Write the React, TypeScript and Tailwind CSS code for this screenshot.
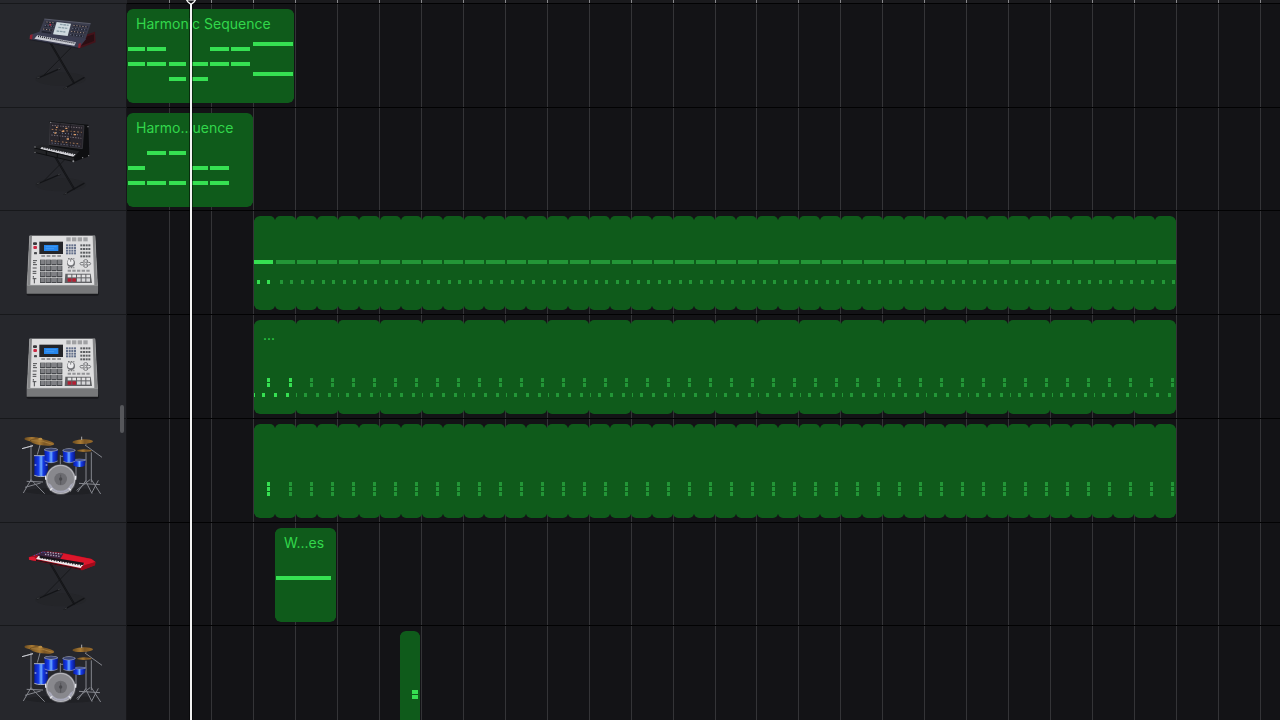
import React from "react";

type Note = { x: number; y: number; w: number; dim?: boolean };

const STEP = 21;

const range = (n: number) => Array.from({ length: n }, (_, i) => i);

const SLOTS = [
  { x: 1, w: 17 },
  { x: 20, w: 19 },
  { x: 42, w: 17 },
  { x: 64, w: 17 },
  { x: 83, w: 19 },
  { x: 104, w: 19 },
];

const phrase = (slots: number[], y: number): Note[] => slots.map((s) => ({ ...SLOTS[s], y }));

const harmonicLong: Note[] = [
  ...phrase([0, 1, 4, 5], 38),
  ...phrase([0, 1, 2, 3, 4, 5], 53),
  ...phrase([2, 3], 68),
  { x: 126, y: 33, w: 40 },
  { x: 126, y: 63, w: 40 },
];

const harmonicShort: Note[] = [
  ...phrase([1, 2], 38),
  ...phrase([0, 3, 4], 53),
  ...phrase([0, 1, 2, 3, 4], 68),
];

const kickLoop: Note[] = range(44).flatMap((k) => [
  { x: k ? k * STEP + 1 : 0, y: 44, w: 19, dim: k > 0 },
  { x: k * STEP + (k ? 5 : 3), y: 64, w: 3, dim: k > 0 },
  { x: k * STEP + (k ? 15 : 13), y: 64, w: 3, dim: k > 0 },
]);

const hatLoop: Note[] = [
  ...range(44).flatMap((k) =>
    [58, 63].map((y) => ({ x: k * STEP + (k ? 14 : 13), y, w: 3, dim: k > 1 })),
  ),
  ...range(22).flatMap((k) =>
    [0, 8, 20, 32].map((x, i) => ({ x: k * STEP * 2 + x, y: 73, w: i ? 3 : 1, dim: k > 0 })),
  ),
];

const snareLoop: Note[] = range(44).flatMap((k) =>
  [58, 63, 68].map((y) => ({ x: k * STEP + (k ? 14 : 13), y, w: 3, dim: k > 0 })),
);

function Notes({ notes }: { notes: Note[] }) {
  return (
    <svg className="absolute inset-0 h-full w-full" shapeRendering="crispEdges" aria-hidden="true">
      {notes.map((n, i) => (
        <rect key={i} x={n.x} y={n.y} width={n.w} height="4" fill={n.dim ? "#239637" : "#36e052"} />
      ))}
    </svg>
  );
}

type RegionProps = { className: string; title?: string; loops?: number; notes: Note[] };

function Region({ className, title, loops = 1, notes }: RegionProps) {
  return (
    <div className={"relative flex h-[94px] flex-none overflow-hidden rounded-md " + className}>
      {range(loops).map((i) => (
        <div key={i} className="h-full flex-1 rounded-[5px] bg-[#0f5b1b]" />
      ))}
      <div className="absolute inset-x-0 inset-y-[4px] bg-[#0f5b1b]" />
      <Notes notes={notes} />
      {title && (
        <p className="absolute top-[5px] left-[9px] text-sm leading-5 whitespace-nowrap text-[#32d74b]">{title}</p>
      )}
    </div>
  );
}

function Stand() {
  return (
    <g fill="none" strokeLinecap="round">
      <ellipse cx="182" cy="240" rx="76" ry="20" fill="#242529" />
      <path d="M213 146 L132 228" stroke="#17181b" strokeWidth="3" />
      <path d="M150 130 L222 252" stroke="#121316" strokeWidth="6" />
      <path d="M151 132 L220 249" stroke="#26272b" strokeWidth="1" />
      <path d="M112 238 L180 209 M193 269 L252 236" stroke="#131417" strokeWidth="4" />
      <path d="M112 237 L118 235 M175 210 L180 208 M194 268 L200 265" stroke="#4a4b4f" strokeWidth="2" />
    </g>
  );
}

const shell = "h-[90px] w-[90px] flex-none";

function PolySynth() {
  return (
    <svg className={shell} viewBox="54 33 270 270" role="img" aria-label="Poly synth">
      <Stand />
      <path d="M262 106 L285 98 L287 130 L240 148 L236 132Z" fill="#43131a" />
      <path d="M262 112 L282 106 L282 126 L244 140Z" fill="#2b0e13" />
      <path d="M133 60 L272 74 L256 122 L117 101Z" fill="#3a3c4c" />
      <path d="M133 60 L272 74" stroke="#6c6f80" strokeWidth="2" />
      <path d="M90 108 L116 99 L258 120 L236 148 L89 121Z" fill="#3a3c50" />
      <path d="M90 108 L98 106 L96 123 L89 121Z M236 134 L243 132 L241 146 L234 148Z" fill="#8f2230" />
      <path d="M112 109 L228 130 L223 140 L103 119Z" fill="#c9cbd3" />
      <path d="M114 112 L226 133" stroke="#1c1d26" strokeWidth="4" strokeDasharray="3 3" />
      <path d="M89 122 L236 148" stroke="#1c1d26" strokeWidth="3" />
      <path d="M170 69 L213 74 L203 111 L159 106Z" fill="#cfd9de" />
      <path d="M180 76 L206 79 M175 85 L202 88 M170 96 L196 99" stroke="#8b9ea8" strokeWidth="4" strokeDasharray="8 2" />
      <path d="M137 70 L166 73 M132 80 L162 83 M128 90 L158 94 M125 98 L153 102" stroke="#20222f" strokeWidth="5" />
      <path d="M219 79 L264 84 M216 88 L260 93 M213 97 L256 102 M210 107 L252 112" stroke="#20222f" strokeWidth="5" />
      <path d="M139 69 L166 72 M129 90 L157 94 M220 79 L263 84 M213 97 L256 102" stroke="#a28f86" strokeWidth="3" strokeDasharray="4 5" />
      <path d="M134 79 L162 83 M217 88 L260 93 M211 107 L252 112" stroke="#8890a8" strokeWidth="3" strokeDasharray="3 6" />
      <circle cx="151" cy="77" r="3" fill="#bb3045" />
    </svg>
  );
}

function ModularSynth() {
  return (
    <svg className={shell} viewBox="54 28 270 270" role="img" aria-label="Modular synth">
      <Stand />
      <path d="M149 50 L265 60 L268 155 L222 171 L148 125Z" fill="#0e0f11" />
      <path d="M150 53 L252 63 L247 132 L148 120Z" fill="#28252c" stroke="#4d4c52" strokeWidth="1.5" />
      <path d="M156 62 L246 70 M154 91 L244 101" stroke="#7d727a" strokeWidth="3" strokeDasharray="4 4" />
      <path d="M155 74 L245 83 M153 108 L241 118" stroke="#a97b56" strokeWidth="3" strokeDasharray="5 6" />
      <path d="M159 83 L241 91 M155 115 L239 125" stroke="#747f9a" strokeWidth="3" strokeDasharray="3 6" />
      <path d="M180 56 L178 122 M212 59 L208 127" stroke="#131218" strokeWidth="2" />
      <path d="M163 85h6M185 80h8M200 103h7M221 90h7M168 68h5M196 71h6" stroke="#db9c68" strokeWidth="4" />
      <path d="M103 126 L125 120 L238 140 L222 158 L222 171 L103 143Z" fill="#222326" />
      <path d="M125 127 L227 149 L219 156 L121 133Z" fill="#d0d0d5" />
      <path d="M130 129 L222 148" stroke="#222328" strokeWidth="4" strokeDasharray="3 4" />
      <path d="M103 130 L222 159 M139 139 L139 152 M172 147 L172 159" stroke="#0d0e10" strokeWidth="3" />
      <path d="M103 143 L222 171" stroke="#0f1012" strokeWidth="3" />
      <g fill="#8f9094">
        <circle cx="105" cy="127" r="2" />
        <circle cx="105" cy="143" r="2" />
        <circle cx="220" cy="170" r="3" />
        <circle cx="266" cy="153" r="2" />
        <circle cx="264" cy="66" r="2" />
        <circle cx="152" cy="53" r="2" />
        <circle cx="248" cy="159" r="2" />
      </g>
    </svg>
  );
}

function DrumMachine() {
  return (
    <svg className={shell} viewBox="54 25 270 270" role="img" aria-label="Drum machine">
      <rect x="80" y="245" width="216" height="13" rx="4" fill="#18191c" />
      <path d="M88 78 H286 L294 226 V252 H80 V226Z" fill="#77787a" />
      <path d="M89 78 H285 L292 226 H82Z" fill="#dededf" />
      <path d="M89 79 L96 79 L91 226 L82 226Z M278 79 H285 L292 226 H283Z" fill="#858688" />
      <path d="M81 227 H294" stroke="#a3a4a5" strokeWidth="2" />
      <rect x="118" y="96" width="71" height="37" fill="#242529" />
      <rect x="132" y="106" width="43" height="18" fill="#2586ec" />
      <path d="M137 111h33M137 117h25" stroke="#4fa4f8" strokeWidth="2" />
      <g fill="#a0a1a3">
        {[199, 216, 233, 250].map((x) => (
          <rect key={x} x={x} y="83" width="13" height="12" />
        ))}
      </g>
      {range(4).map((r) =>
        range(4).map((c) => (
          <g key={r * 4 + c}>
            <rect x={120 + c * 17} y={150 + r * 18} width="16" height="16" fill="#46484c" />
            <rect x={122 + c * 17} y={151 + r * 18} width="12" height="12" fill="#7f8084" />
            <rect x={198 + c * 8} y={104 + r * 8} width="6" height="6" fill="#65718b" />
            <rect x={241 + c * 8} y={104 + r * 11} width="6" height="6" fill="#5c5e61" />
          </g>
        )),
      )}
      {range(4).map((c) => (
        <path key={c} d={`M${124 + c * 16} 137h11v4h-11z`} fill="#717276" />
      ))}
      <rect x="99" y="98" width="12" height="8" rx="3" fill="#38393c" />
      <rect x="100" y="109" width="11" height="9" rx="3" fill="#cc2943" />
      <rect x="102" y="127" width="9" height="7" rx="2" fill="#484a4d" />
      <path d="M99 153h12M99 159h8M99 165h12M98 175h12M98 185h11M98 191h11M100 199v5M103 207v14M98 207h11" stroke="#4a4b4e" strokeWidth="3" />
      <circle cx="213" cy="160" r="12" fill="#737478" />
      <circle cx="212" cy="158" r="9" fill="#ececee" />
      <path d="M212 149v7" stroke="#505154" strokeWidth="2" />
      <g fill="#e6e6e8" stroke="#77787b" strokeWidth="3">
        <ellipse cx="257" cy="154" rx="6" ry="4" />
        <ellipse cx="246" cy="162" rx="6" ry="4" />
        <ellipse cx="266" cy="162" rx="6" ry="4" />
        <ellipse cx="257" cy="169" rx="6" ry="4" />
      </g>
      <path d="M204 147h19M204 174h19" stroke="#7a7b7e" strokeWidth="4" strokeDasharray="5 3" />
      <path d="M203 183h68" stroke="#929396" strokeWidth="6" strokeDasharray="10 4" />
      <path d="M196 192h76l4 28h-82z" fill="#606164" />
      {range(5).map((c) => (
        <g key={c} fill="#e2e2e3">
          <rect x={203 + c * 14} y="195" width="11" height="8" />
          <rect x={203 + c * 14} y="206" width="11" height="10" fill={c < 2 ? "#b51e32" : "#d6d6d8"} />
        </g>
      ))}
    </svg>
  );
}

function DrumKit() {
  return (
    <svg className={shell} viewBox="54 76 270 270" role="img" aria-label="Drum kit">
      <defs>
        <linearGradient id="shellBlue">
          <stop offset="0" stopColor="#0a1fa6" />
          <stop offset=".3" stopColor="#1438e8" />
          <stop offset=".5" stopColor="#6cacff" />
          <stop offset=".65" stopColor="#163ae6" />
          <stop offset="1" stopColor="#07157c" />
        </linearGradient>
        <linearGradient id="brass">
          <stop offset="0" stopColor="#6b4b1e" />
          <stop offset=".4" stopColor="#a87a34" />
          <stop offset=".6" stopColor="#7c5725" />
          <stop offset="1" stopColor="#9a6c2a" />
        </linearGradient>
      </defs>
      <ellipse cx="185" cy="275" rx="112" ry="10" fill="#202125" />
      <g fill="none" stroke="#84868d" strokeWidth="3">
        <path d="M93 135V243M66 147L99 138M93 240L70 280M93 240L134 282M80 245L129 247M75 263L122 250" />
        <path d="M120 136L112 165M258 159V244M274 158V248M255 136L306 173M258 121V135M258 242L233 277M257 244L276 282M273 238L302 283M237 251L300 255M230 272L270 240M275 280L295 242" />
        <path d="M181 166V205M182 170H190M228 200V234L211 277" />
      </g>
      <path d="M66 147L99 138" stroke="#c8cad0" strokeWidth="3" />
      <path d="M103 169H144V228Q122 235 103 227Z" fill="url(#shellBlue)" />
      <path d="M102 168H145M103 227Q120 234 144 228" stroke="#aab2c8" strokeWidth="3" fill="none" />
      <path d="M104 196h5M137 196h5" stroke="#dce4f4" strokeWidth="3" />
      <path d="M220 182H257L254 199Q237 205 220 198Z" fill="url(#shellBlue)" />
      <ellipse cx="238" cy="181" rx="20" ry="4" fill="#8f99b8" />
      <ellipse cx="238" cy="181" rx="17" ry="2" fill="#2f3f8c" />
      <path d="M133 150H174L172 184Q152 195 135 185Z" fill="url(#shellBlue)" />
      <ellipse cx="153" cy="150" rx="21" ry="6" fill="#9299b0" />
      <ellipse cx="153" cy="150" rx="18" ry="4" fill="#3a4472" />
      <path d="M188 153H225L226 184Q209 194 191 185Z" fill="url(#shellBlue)" />
      <ellipse cx="207" cy="152" rx="20" ry="6" fill="#9299b0" />
      <ellipse cx="207" cy="152" rx="17" ry="4" fill="#3a4472" />
      <path d="M134 184Q153 194 173 184M190 185Q209 194 226 184" stroke="#a0a8c4" strokeWidth="2" fill="none" />
      <circle cx="182" cy="240" r="46" fill="#4a4b50" />
      <circle cx="182" cy="239" r="44" fill="#b5b5bb" />
      <circle cx="182" cy="239" r="40" fill="#88888d" />
      <path d="M144 249A39 39 0 0 0 220 249L211 255A32 32 0 0 1 153 255Z" fill="#a9aabb" />
      <circle cx="182" cy="238" r="19" fill="#6c6c71" />
      <circle cx="182" cy="238" r="5" fill="#4a4a4e" />
      <path d="M182 225V255" stroke="#4a4a4e" strokeWidth="2" />
      <path d="M137 228v12M227 228v12M150 272l7-6M213 272l-7-6" stroke="#e4e5e9" strokeWidth="4" />
      <ellipse cx="101" cy="119" rx="28" ry="7" transform="rotate(4 101 119)" fill="url(#brass)" />
      <ellipse cx="126" cy="128" rx="37" ry="9" transform="rotate(8 126 128)" fill="url(#brass)" />
      <path d="M94 123Q128 121 158 134" stroke="#b48a46" strokeWidth="2" fill="none" />
      <ellipse cx="121" cy="118" rx="6" ry="4" fill="#b98d43" />
      <ellipse cx="248" cy="126" rx="31" ry="7" transform="rotate(-3 248 126)" fill="url(#brass)" />
      <path d="M245 111v10" stroke="#aaa" strokeWidth="3" />
      <ellipse cx="253" cy="153" rx="22" ry="4" fill="url(#brass)" />
    </svg>
  );
}

function StageKeyboard() {
  return (
    <svg className={shell} viewBox="54 28 270 270" role="img" aria-label="Stage keyboard">
      <Stand />
      <path d="M86 113L132 94L190 100L274 117L287 127L285 137L246 152L87 120Z" fill="#a80d1e" />
      <path d="M186 101L274 118L286 127L247 139L176 119Z" fill="#dc162b" />
      <path d="M132 95L190 102L181 118L108 107Z" fill="#3b2540" />
      <path d="M142 98L184 103M135 104L179 110" stroke="#b6acbe" strokeWidth="4" strokeDasharray="4 4" />
      <path d="M101 108L128 97L139 99" stroke="#4d58a1" strokeWidth="3" strokeDasharray="5 3" fill="none" />
      <path d="M115 109L253 132L242 145L108 118Z" fill="#eee8ea" />
      <path d="M119 111L251 133" stroke="#18141a" strokeWidth="7" />
      <path d="M122 115L246 137" stroke="#18141a" strokeWidth="4" strokeDasharray="3 5" />
      <path d="M87 120L108 124V118L103 112L88 112Z" fill="#df1c34" />
      <path d="M108 122L242 149" stroke="#291116" strokeWidth="4" />
      <path d="M245 140L285 128V137L246 152Z" fill="#a00b1b" />
    </svg>
  );
}

const LOOP = "ml-[127px] w-[922px]";

const tracks: { icon: React.ReactNode; region: React.ReactNode }[] = [
  { icon: <PolySynth />, region: <Region className="w-[167px]" title="Harmonic Sequence" notes={harmonicLong} /> },
  { icon: <ModularSynth />, region: <Region className="w-[126px]" title="Harmo...uence" notes={harmonicShort} /> },
  { icon: <DrumMachine />, region: <Region className={LOOP} loops={44} notes={kickLoop} /> },
  { icon: <DrumMachine />, region: <Region className={LOOP} loops={22} title="..." notes={hatLoop} /> },
  { icon: <DrumKit />, region: <Region className={LOOP} loops={44} notes={snareLoop} /> },
  {
    icon: <StageKeyboard />,
    region: <Region className="ml-[148px] w-[61px]" title="W...es" notes={[{ x: 1, y: 48, w: 55 }]} />,
  },
  {
    icon: <DrumKit />,
    region: (
      <Region
        className="ml-[273px] w-5"
        notes={[
          { x: 12, y: 59, w: 6 },
          { x: 12, y: 64, w: 6 },
        ]}
      />
    ),
  },
];

function BarLines({ tone }: { tone: string }) {
  return (
    <div className="grid h-full w-[2350px] grid-cols-[repeat(56,minmax(0,1fr))]">
      {range(56).map((i) => (
        <div key={i} className={i ? "border-l " + tone : ""} />
      ))}
    </div>
  );
}

export default function App() {
  return (
    <main className="relative h-screen overflow-hidden bg-[#131316] font-[Inter,'Liberation_Sans',sans-serif]">
      <div className="flex h-[3px]">
        <div className="w-[127px] flex-none bg-[#26272c]" />
        <div className="min-w-0 flex-1 overflow-hidden bg-[#1a1a1d]">
          <BarLines tone="border-[#88888b]" />
        </div>
      </div>

      <div className="relative grid h-[726px] grid-rows-7">
        <div className="absolute inset-y-0 right-0 left-[127px] overflow-hidden">
          <BarLines tone="border-[#343437]" />
        </div>
        {tracks.map((track, i) => (
          <section key={i} className="relative flex min-h-0">
            <div className="flex w-[127px] flex-none items-center justify-center border-t border-r border-t-[#17181b] border-r-[#17171a] bg-[#26272c]">
              {track.icon}
            </div>
            <div className="flex min-w-0 flex-1 border-t border-[#020203] pt-[5px]">{track.region}</div>
          </section>
        ))}
      </div>

      <div className="absolute top-[405px] left-[120px] h-7 w-1 rounded-full bg-[#56575b]" />

      <div className="absolute inset-y-0 left-[189px] w-1 border-x border-black/50 bg-[#f2f2f2] bg-clip-padding" />
      <svg className="absolute top-0 left-[186px] h-[5px] w-[10px]" viewBox="0 0 10 5" aria-hidden="true">
        <path d="M0.500 0L2 2L5 4.500L8 2L9.500 0Z" fill="#1a1a1d" stroke="#fff" strokeWidth="1.200" />
      </svg>
    </main>
  );
}
